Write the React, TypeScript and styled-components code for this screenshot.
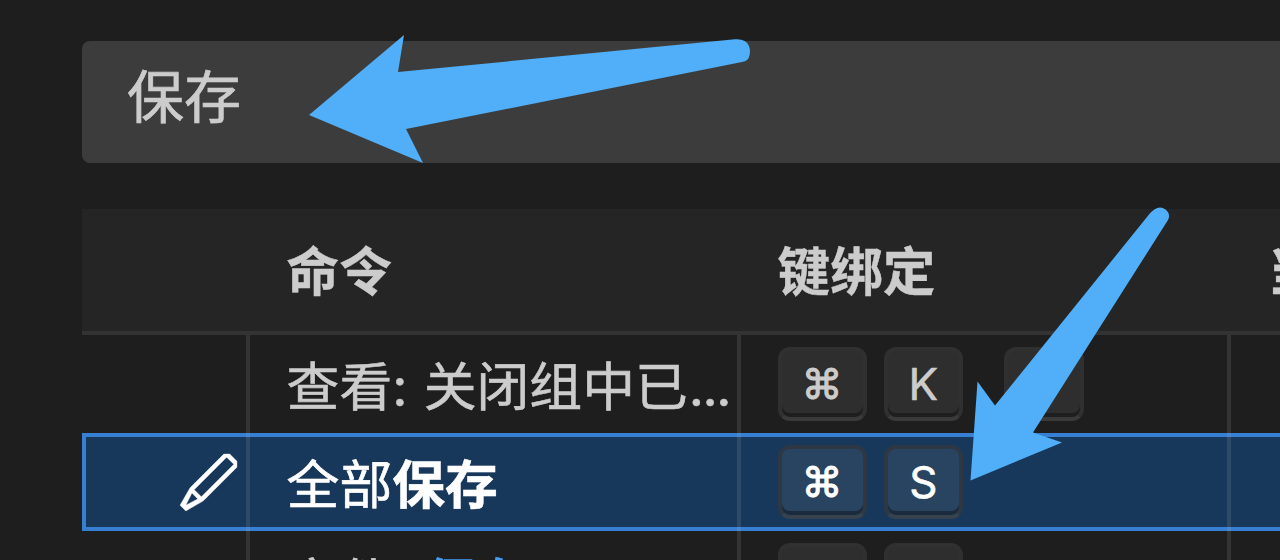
import React from "react"
import styled, { createGlobalStyle } from "styled-components"

type Keybinding = {
  title: React.ReactNode
  chords: string[][]
  selected?: boolean
}

const GlobalStyle = createGlobalStyle`
  body {
    margin: 0;
    background: #1e1e1e;
    color: #cccccc;
    font-family: Inter, "Noto Sans CJK SC", sans-serif;
    overflow: hidden;
  }
`

const Editor = styled.div`
  position: relative;
  box-sizing: border-box;
  height: 560px;
  padding: 41px 0 0 82px;
  overflow: hidden;
`

const SearchBox = styled.div`
  display: flex;
  align-items: center;
  box-sizing: border-box;
  width: 1400px;
  height: 122px;
  padding: 0 45px 19px;
  border-radius: 8px;
  background: #3c3c3c;
  font-size: 57px;
  -webkit-text-stroke: 0.7px currentColor;
`

const Table = styled.div`
  width: 1400px;
  margin-top: 46px;
  font-size: 52.8px;
`

const Row = styled.div<{ $selected?: boolean }>`
  display: grid;
  grid-template-columns: 167.6px 491px 490px 1fr;
  height: 98px;
  color: ${(props) => (props.$selected ? "#ffffff" : "#cccccc")};
  background: ${(props) => (props.$selected ? "#17385b" : "transparent")};
  box-shadow: ${(props) =>
    props.$selected ? "inset 0 0 0 4px #367fd3" : "none"};
`

const HeaderRow = styled(Row)`
  box-sizing: border-box;
  height: 126px;
  background: #252525;
  border-bottom: 4px solid #333333;
  font-size: 52.6px;
  font-weight: 700;
  -webkit-text-stroke: 0.4px currentColor;
`

const Cell = styled.div<{ $header?: boolean }>`
  display: flex;
  align-items: center;
  box-sizing: border-box;
  min-width: 0;
  padding-left: 37px;
  padding-bottom: ${(props) => (props.$header ? 4 : 0)}px;
  white-space: nowrap;
  border-right: 4px solid
    ${(props) => (props.$header ? "transparent" : "rgba(204, 204, 204, 0.13)")};
`

const ActionCell = styled(Cell)`
  justify-content: flex-end;
  padding: 0 5px 0 0;
`

const Title = styled.span`
  padding-bottom: 3px;
  overflow: hidden;
  white-space: pre;
  -webkit-text-stroke: 0.6px currentColor;
`

const Colon = styled.span`
  margin-right: 1.5px;
`

const Ellipsis = styled.span`
  margin-left: 1px;
  letter-spacing: -1.4px;
`

const Match = styled.span<{ $selected?: boolean }>`
  color: ${(props) => (props.$selected ? "#ffffff" : "#429df5")};
  font-weight: 700;
  -webkit-text-stroke: 0.5px currentColor;
`

const Chord = styled.div`
  display: flex;
  gap: 17px;
  margin-right: 41px;
`

const Key = styled.kbd<{ $wide?: boolean }>`
  display: flex;
  align-items: center;
  justify-content: center;
  box-sizing: border-box;
  width: ${(props) => (props.$wide ? 89 : 79.5)}px;
  height: 74px;
  padding-bottom: 1px;
  border: 4px solid rgba(51, 51, 51, 0.6);
  border-bottom-color: rgba(68, 68, 68, 0.6);
  border-radius: 12px;
  background: rgba(128, 128, 128, 0.17);
  box-shadow: inset 0 -4px 0 rgba(0, 0, 0, 0.36);
  font-family: Inter, sans-serif;
  font-size: ${(props) => (props.$wide ? 41 : 44)}px;
  line-height: 1;
  -webkit-text-stroke: ${(props) => (props.$wide ? 1 : 0.6)}px currentColor;
`

const Annotations = styled.svg`
  position: absolute;
  top: 0;
  left: 0;
  fill: #50aff8;
`

const keybindings: Keybinding[] = [
  {
    title: (
      <>
        查看<Colon>: </Colon>关闭组中已<Ellipsis>...</Ellipsis>
      </>
    ),
    chords: [["⌘", "K"], ["U"]],
  },
  {
    title: (
      <>
        全部<Match $selected>保存</Match>
      </>
    ),
    chords: [["⌘", "S"]],
    selected: true,
  },
  {
    title: (
      <>
        文件<Colon>: </Colon>
        <Match>保存</Match>
      </>
    ),
    chords: [["⌘", "S"]],
  },
]

function EditIcon() {
  return (
    <svg
      width="65"
      height="65"
      viewBox="0 0 16 16"
      fill="currentColor"
      stroke="currentColor"
      strokeWidth="0.1"
    >
      <path
        fillRule="evenodd"
        d="M13.23 1h-1.46L3.52 9.25l-.16.22L1 13.59 2.41 15l4.12-2.36.22-.16L15 4.23V2.77L13.23 1zM2.41 13.59l1.51-3 1.45 1.45-2.96 1.55zm3.83-2.06L4.47 9.76l8-8 1.77 1.77-8 8z"
      />
    </svg>
  )
}

function KeybindingRow({ title, chords, selected }: Keybinding) {
  return (
    <Row $selected={selected}>
      <ActionCell>{selected && <EditIcon />}</ActionCell>
      <Cell>
        <Title>{title}</Title>
      </Cell>
      <Cell>
        {chords.map((keys, i) => (
          <Chord key={i}>
            {keys.map((k) => (
              <Key key={k} $wide={k === "⌘"}>
                {k}
              </Key>
            ))}
          </Chord>
        ))}
      </Cell>
      <Cell />
    </Row>
  )
}

export default function App() {
  return (
    <>
      <GlobalStyle />
      <Editor>
        <SearchBox>保存</SearchBox>
        <Table>
          <HeaderRow>
            <Cell $header />
            <Cell $header>命令</Cell>
            <Cell $header>键绑定</Cell>
            <Cell $header>当</Cell>
          </HeaderRow>
          {keybindings.map((k, i) => (
            <KeybindingRow key={i} {...k} />
          ))}
        </Table>
        <Annotations width="1280" height="560">
          <path d="M309 115L404 35L398 72L735 39.3Q746 38.5 749 46Q751 52 749 57Q748 61 742 62L406 129L423 163Z" />
          <path d="M970.5 480.5L977.5 381.5L995 405.5L1149 214.5Q1158 203.5 1165.5 209.5Q1171 214 1168 220L1033 432.5L1062 442.5Z" />
        </Annotations>
      </Editor>
    </>
  )
}
